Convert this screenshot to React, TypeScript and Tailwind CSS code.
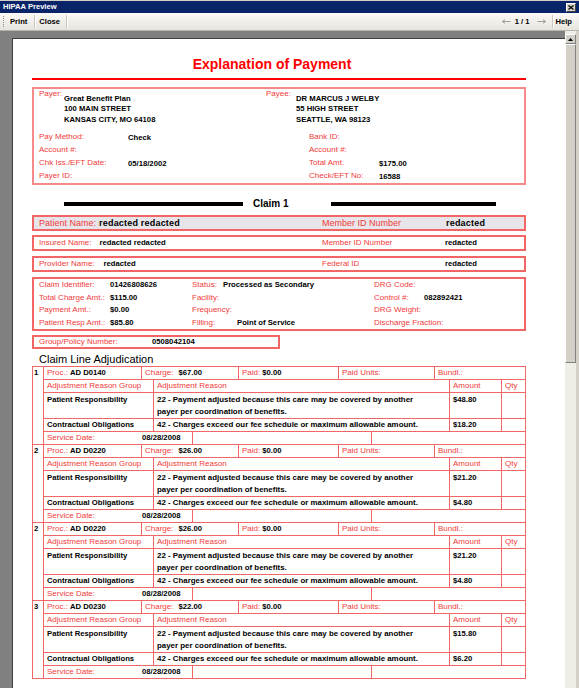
import React from "react";

const bdr = "border-[#f26666]";

type Line = { n: string; proc: string; charge: string; pr: string; co: string };

const lines: Line[] = [
  { n: "1", proc: "AD D0140", charge: "$67.00", pr: "$48.80", co: "$18.20" },
  { n: "2", proc: "AD D0220", charge: "$26.00", pr: "$21.20", co: "$4.80" },
  { n: "2", proc: "AD D0220", charge: "$26.00", pr: "$21.20", co: "$4.80" },
  { n: "3", proc: "AD D0230", charge: "$22.00", pr: "$15.80", co: "$6.20" },
];

function Lbl({ children, className = "" }: { children?: React.ReactNode; className?: string }) {
  return <span className={`text-[#f23a3a] ${className}`}>{children}</span>;
}

function Val({ children, className = "" }: { children?: React.ReactNode; className?: string }) {
  return <span className={`font-bold text-black text-[7.7px] ${className}`}>{children}</span>;
}

function PayRow({ a, av, b, bv }: { a: string; av?: string; b: string; bv?: string }) {
  return (
    <div className="flex h-[13px] items-center">
      <Lbl className="w-[89px]">{a}</Lbl>
      <Val className="w-[181px]">{av}</Val>
      <Lbl className="w-[70px]">{b}</Lbl>
      <Val>{bv}</Val>
    </div>
  );
}

function ClaimLine({ l }: { l: Line }) {
  return (
    <div className="flex">
      <div className={`w-[11px] border-r border-b ${bdr} pl-[1px] leading-[12px]`}>
        <Val>{l.n}</Val>
      </div>
      <div className="flex w-[482px] flex-col">
        <div className="flex h-[13px]">
          <div className={`flex w-[98px] items-center border-r border-b ${bdr} pl-[3px]`}>
            <Lbl>Proc.:</Lbl>
            <Val className="ml-[2px]">{l.proc}</Val>
          </div>
          <div className={`flex w-[97px] items-center border-r border-b ${bdr} pl-[3px]`}>
            <Lbl>Charge:</Lbl>
            <Val className="ml-[5px]">{l.charge}</Val>
          </div>
          <div className={`flex w-[100px] items-center border-r border-b ${bdr} pl-[3px]`}>
            <Lbl>Paid:</Lbl>
            <Val className="ml-[2px]">$0.00</Val>
          </div>
          <div className={`flex w-[96px] items-center border-r border-b ${bdr} pl-[3px]`}>
            <Lbl>Paid Units:</Lbl>
          </div>
          <div className={`flex w-[91px] items-center border-r border-b ${bdr} pl-[3px]`}>
            <Lbl>Bundl.:</Lbl>
          </div>
        </div>
        <div className="flex h-[13px]">
          <div className={`flex w-[110px] items-center border-r border-b ${bdr} pl-[3px]`}>
            <Lbl>Adjustment Reason Group</Lbl>
          </div>
          <div className={`flex w-[296px] items-center border-r border-b ${bdr} pl-[3px]`}>
            <Lbl>Adjustment Reason</Lbl>
          </div>
          <div className={`flex w-[52px] items-center border-r border-b ${bdr} pl-[3px]`}>
            <Lbl>Amount</Lbl>
          </div>
          <div className={`flex w-[24px] items-center border-r border-b ${bdr} pl-[3px]`}>
            <Lbl>Qty</Lbl>
          </div>
        </div>
        <div className="flex h-[26px] leading-[12.5px]">
          <div className={`w-[110px] border-r border-b ${bdr} pl-[3px] pt-[0.5px]`}>
            <Val>Patient Responsibility</Val>
          </div>
          <div className={`w-[296px] border-r border-b ${bdr} pl-[3px] pt-[0.5px]`}>
            <span className="text-[7.9px] font-bold">
              22 - Payment adjusted because this care may be covered by another
              <br />
              payer per coordination of benefits.
            </span>
          </div>
          <div className={`w-[52px] border-r border-b ${bdr} pl-[3px] pt-[0.5px]`}>
            <Val>{l.pr}</Val>
          </div>
          <div className={`w-[24px] border-r border-b ${bdr}`} />
        </div>
        <div className="flex h-[13px]">
          <div className={`flex w-[110px] items-center border-r border-b ${bdr} pl-[3px]`}>
            <Val>Contractual Obligations</Val>
          </div>
          <div className={`flex w-[296px] items-center border-r border-b ${bdr} pl-[3px]`}>
            <span className="text-[7.9px] font-bold">
              42 - Charges exceed our fee schedule or maximum allowable amount.
            </span>
          </div>
          <div className={`flex w-[52px] items-center border-r border-b ${bdr} pl-[3px]`}>
            <Val>{l.co}</Val>
          </div>
          <div className={`w-[24px] border-r border-b ${bdr}`} />
        </div>
        <div className="flex h-[13px]">
          <div className={`flex w-[149px] items-center border-r border-b ${bdr} pl-[3px]`}>
            <Lbl className="w-[95px]">Service Date:</Lbl>
            <Val>08/28/2008</Val>
          </div>
          <div className={`w-[179px] border-r border-b ${bdr}`} />
          <div className={`w-[154px] border-r border-b ${bdr}`} />
        </div>
      </div>
    </div>
  );
}

function Arrow({ flip = false }: { flip?: boolean }) {
  return (
    <svg width="9" height="5" viewBox="0 0 9 5" className={flip ? "rotate-180" : ""}>
      <path d="M0.5 2.5 H8.5 M0.5 2.5 L3 0.5 M0.5 2.5 L3 4.5" stroke="#9c9c9c" strokeWidth="1" fill="none" />
    </svg>
  );
}

export default function App() {
  return (
    <div className="flex h-[688px] w-[579px] flex-col overflow-hidden bg-[#d4d0c8] pr-[3px] font-['Liberation_Sans',Arial,sans-serif] text-[8px] leading-none text-black">
      {/* title bar */}
      <div className="-mr-[3px] mt-[1px] flex h-[12px] items-center bg-[#0a246a] pl-[3px] pr-[3px]">
        <span className="text-[7.6px] font-bold text-white">HIPAA Preview</span>
        <div className="ml-auto flex h-[9px] w-[10px] items-center justify-center border-t border-l border-white border-r border-b border-r-[#404040] border-b-[#404040] bg-[#d4d0c8]">
          <svg width="6" height="5" viewBox="0 0 6 5">
            <path d="M0.5 0.5 L5.5 4.5 M5.5 0.5 L0.5 4.5" stroke="#000" strokeWidth="1.2" />
          </svg>
        </div>
      </div>

      {/* toolbar */}
      <div className="-mr-[3px] flex h-[18px] items-center bg-gradient-to-b from-[#fbfaf8] to-[#e7e4dd] border-b border-[#b8b5ad] text-[7.6px] font-bold">
        <div className="ml-[3px] h-[11px] w-[2px] border-l border-dotted border-[#8a8a8a]" />
        <span className="ml-[5px]">Print</span>
        <div className="ml-[7px] h-[13px] w-[2px] border-l border-[#c9c6bd] border-r border-r-white" />
        <span className="ml-[3px]">Close</span>
        <div className="ml-[6px] h-[13px] w-[2px] border-l border-[#c9c6bd] border-r border-r-white" />
        <div className="ml-auto flex items-center pr-[7px]">
          <Arrow />
          <span className="ml-[4px]">1 / 1</span>
          <span className="ml-[7px]">
            <Arrow flip />
          </span>
          <div className="ml-[6px] h-[13px] w-[2px] border-l border-[#c9c6bd] border-r border-r-white" />
          <span className="ml-[2px]">Help</span>
        </div>
      </div>

      {/* view area */}
      <div className="flex min-h-0 flex-1">
        <div className="min-w-0 flex-1 overflow-hidden bg-[#808080] pl-[12px] pt-[7px]">
          <div className="h-full border-l border-t border-[#404040] bg-white pl-[19px] pt-[17px]">
            <div className="w-[494px]">
              <div className="pr-[14px] text-center text-[14px] font-bold leading-[16px] text-[#ff0000]">
                Explanation of Payment
              </div>
              <div className="mt-[6px] h-[2px] bg-[#ff0000]" />

              {/* payer / payee */}
              <div className="mt-[7px] h-[98px] border-2 border-[#f58a8a] pl-[5px]">
                <div className="flex">
                  <Lbl className="w-[25px] leading-[10px]">Payer:</Lbl>
                  <div className="mt-[5px] flex w-[202px] flex-col leading-[10.3px]">
                    <Val>Great Benefit Plan</Val>
                    <Val>100 MAIN STREET</Val>
                    <Val>KANSAS CITY, MO 64108</Val>
                  </div>
                  <Lbl className="w-[30px] leading-[10px]">Payee:</Lbl>
                  <div className="mt-[5px] flex flex-col leading-[10.3px]">
                    <Val>DR MARCUS J WELBY</Val>
                    <Val>55 HIGH STREET</Val>
                    <Val>SEATTLE, WA 98123</Val>
                  </div>
                </div>
                <div className="mt-[6px]">
                  <PayRow a="Pay Method:" av="Check" b="Bank ID:" />
                  <PayRow a="Account #:" b="Account #:" />
                  <PayRow a="Chk Iss./EFT Date:" av="05/18/2002" b="Total Amt." bv="$175.00" />
                  <PayRow a="Payer ID:" b="Check/EFT No:" bv="16588" />
                </div>
              </div>

              {/* claim heading */}
              <div className="mt-[12px] flex h-[14px] items-center">
                <div className="ml-[32px] h-[4px] w-[179px] bg-black" />
                <div className="ml-[10px] w-[78px] text-[10px] font-bold">Claim 1</div>
                <div className="h-[4px] w-[165px] bg-black" />
              </div>

              <div className={`mt-[4px] flex h-[16px] items-center border-2 ${bdr} bg-[#e7e5ea] pl-[5px] text-[9px]`}>
                <div className="flex w-[283px] items-center">
                  <Lbl>Patient Name:</Lbl>
                  <span className="ml-[3px] font-bold tracking-[0.2px]">redacted redacted</span>
                </div>
                <Lbl className="w-[124px]">Member ID Number</Lbl>
                <span className="font-bold tracking-[0.2px]">redacted</span>
              </div>

              <div className={`mt-[4px] flex h-[16px] items-center border-2 ${bdr} pl-[5px]`}>
                <div className="flex w-[283px] items-center">
                  <Lbl>Insured Name:</Lbl>
                  <Val className="ml-[8px]">redacted redacted</Val>
                </div>
                <Lbl className="w-[123px]">Member ID Number</Lbl>
                <Val>redacted</Val>
              </div>

              <div className={`mt-[5px] flex h-[16px] items-center border-2 ${bdr} pl-[5px]`}>
                <div className="flex w-[283px] items-center">
                  <Lbl>Provider Name:</Lbl>
                  <Val className="ml-[9px]">redacted</Val>
                </div>
                <Lbl className="w-[123px]">Federal ID</Lbl>
                <Val>redacted</Val>
              </div>

              {/* claim detail */}
              <div className={`mt-[5px] h-[54px] border-2 ${bdr} pl-[5px] leading-[12.7px]`}>
                <div className="flex h-[12.7px] items-center">
                  <Lbl className="w-[71px]">Claim Identifier:</Lbl>
                  <Val className="w-[82px]">01426808626</Val>
                  <div className="flex w-[182px] items-center">
                    <Lbl className="w-[31px]">Status:</Lbl>
                    <Val>Processed as Secondary</Val>
                  </div>
                  <Lbl>DRG Code:</Lbl>
                </div>
                <div className="flex h-[12.7px] items-center">
                  <Lbl className="w-[71px]">Total Charge Amt.:</Lbl>
                  <Val className="w-[82px]">$115.00</Val>
                  <Lbl className="w-[182px]">Facility:</Lbl>
                  <Lbl className="w-[50px]">Control #:</Lbl>
                  <Val>082892421</Val>
                </div>
                <div className="flex h-[12.7px] items-center">
                  <Lbl className="w-[71px]">Payment Amt.:</Lbl>
                  <Val className="w-[82px]">$0.00</Val>
                  <Lbl className="w-[182px]">Frequency:</Lbl>
                  <Lbl>DRG Weight:</Lbl>
                </div>
                <div className="flex h-[12.7px] items-center">
                  <Lbl className="w-[71px]">Patient Resp Amt.:</Lbl>
                  <Val className="w-[82px]">$85.80</Val>
                  <div className="flex w-[182px] items-center">
                    <Lbl className="w-[45px]">Filling:</Lbl>
                    <Val>Point of Service</Val>
                  </div>
                  <Lbl>Discharge Fraction:</Lbl>
                </div>
              </div>

              <div className={`mt-[4px] flex h-[14px] w-[248px] items-center border-2 ${bdr} pl-[5px]`}>
                <Lbl className="w-[113px]">Group/Policy Number:</Lbl>
                <Val>0508042104</Val>
              </div>

              <div className="mt-[4px] pl-[7px] text-[11px] leading-[13px]">Claim Line Adjudication</div>

              <div className={`border-t border-l ${bdr}`}>
                {lines.map((l, i) => (
                  <ClaimLine key={i} l={l} />
                ))}
              </div>
            </div>
          </div>
        </div>

        {/* scrollbar */}
        <div className="flex w-[11px] flex-col bg-[#eeede6]">
          <div className="mt-[3px] flex h-[10px] items-center justify-center border-t border-l border-white border-r border-b border-r-[#808080] border-b-[#808080] bg-[#d4d0c8]">
            <svg width="5" height="3" viewBox="0 0 5 3">
              <path d="M2.5 0 L5 3 L0 3 Z" fill="#000" />
            </svg>
          </div>
          <div className="h-[319px] border-t border-l border-white border-r border-b border-r-[#808080] border-b-[#808080] bg-[#d4d0c8]" />
        </div>
      </div>
    </div>
  );
}
